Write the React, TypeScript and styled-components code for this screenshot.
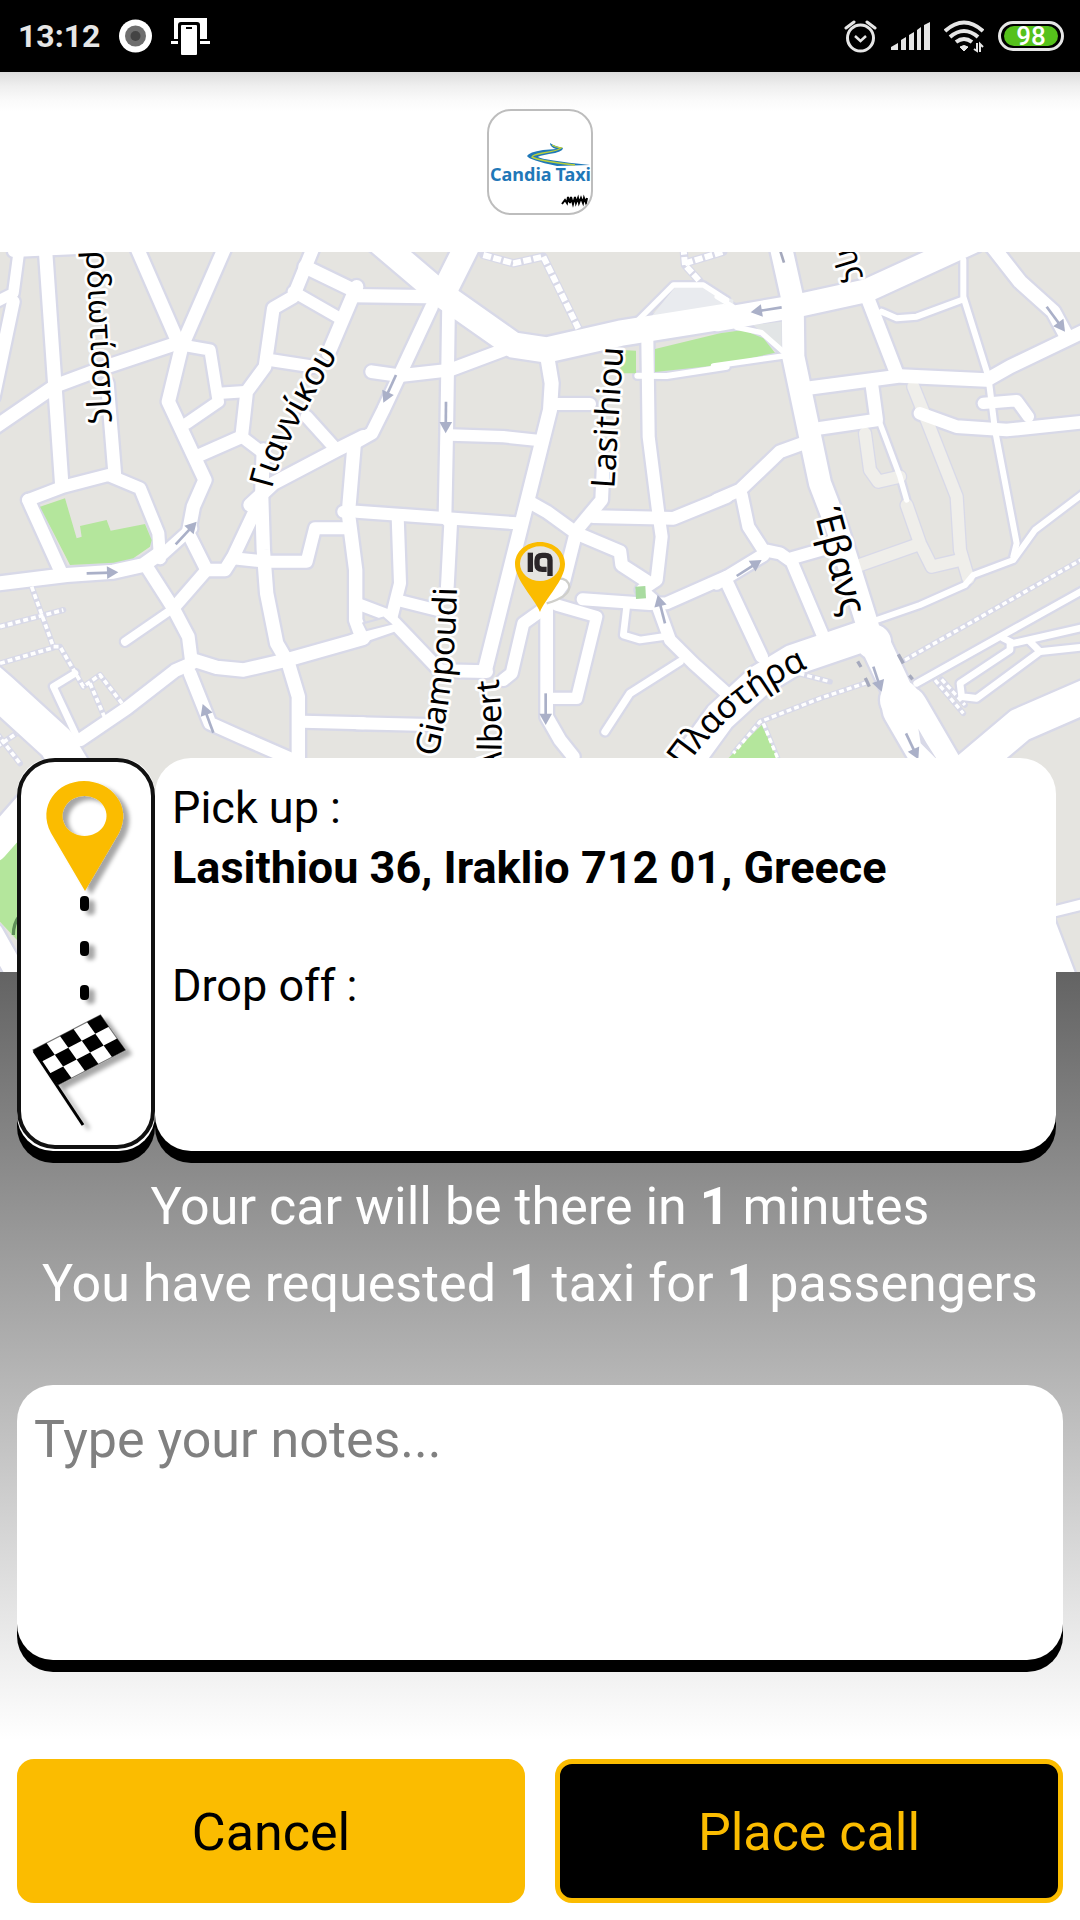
import React from "react";
import styled, { createGlobalStyle, css } from "styled-components";

const GlobalStyle = createGlobalStyle`
  *, *::before, *::after { box-sizing: border-box; }
  html, body { margin: 0; padding: 0; background: #fff; }
  body { font-family: Roboto, "Noto Sans", sans-serif; color: #000; }
`;

const gold = "#fbbc00";

/* ---------- page ---------- */

const Page = styled.div`
  min-height: 100vh;
  display: flex;
  flex-direction: column;
`;

const StatusBar = styled.header`
  height: 72px;
  padding: 0 16px 0 18px;
  display: flex;
  align-items: center;
  justify-content: space-between;
  background: #000;
  color: #e6e6e6;
`;

const StatusGroup = styled.div<{ $gap: number }>`
  display: flex;
  align-items: center;
  gap: ${(p) => p.$gap}px;
  svg { display: block; }
`;

const Clock = styled.time`
  font-size: 32px;
  line-height: 40px;
  font-weight: 700;
`;

const BrandBar = styled.div`
  height: 180px;
  display: flex;
  align-items: center;
  justify-content: center;
  background: linear-gradient(#dcdcdc 0, #efefef 14px, #fafafa 28px, #fff 40px);
`;

const BrandTile = styled.div`
  width: 106px;
  height: 106px;
  border: 2px solid #bdbdbd;
  border-radius: 24px;
  background: #fff;
  overflow: hidden;
  svg { display: block; }
`;

const MapArea = styled.section`
  height: 720px;
  background: #e5e4e0;
  svg { display: block; width: 100%; height: 100%; }
`;

const Panel = styled.main`
  flex: 1;
  display: flex;
  flex-direction: column;
  padding: 0 17px 17px;
  background: linear-gradient(#636363 0, #fff 768px);
`;

const raised = css`
  background: #fff;
  border-radius: 36px;
  box-shadow: 0 12px 0 #000;
`;

const Trip = styled.section`
  display: flex;
  height: 393px;
  margin: -214px 7px 17px 0;
`;

const RouteCard = styled.div`
  ${raised}
  width: 138px;
  svg { display: block; }
`;

const AddressCard = styled.dl`
  ${raised}
  flex: 1;
  margin: 0;
  padding: 20px 17px;
  font-size: 45px;
  line-height: 60px;
`;

const Term = styled.dt`
  font-weight: 400;
`;

const Value = styled.dd`
  margin: 0;
  min-height: 118px;
  font-weight: 700;
`;

const Summary = styled.div`
  text-align: center;
  color: #fff;
  font-size: 52px;
  line-height: 77px;
  p { margin: 0; }
`;

const Notes = styled.textarea`
  ${raised}
  display: block;
  width: 100%;
  height: 275px;
  margin: 63px 0 99px;
  padding: 25px 17px;
  border: 0;
  outline: 0;
  resize: none;
  color: #000;
  font: 400 52px/60px Roboto, sans-serif;
  &::placeholder { color: #808080; opacity: 1; }
`;

const Actions = styled.div`
  display: grid;
  grid-template-columns: 1fr 1fr;
  gap: 30px;
`;

const Button = styled.button<{ $dark?: boolean }>`
  height: 144px;
  padding: 4px 0 0;
  border: 5px solid ${gold};
  border-radius: 17px;
  background: ${(p) => (p.$dark ? "#000" : gold)};
  color: ${(p) => (p.$dark ? gold : "#000")};
  font: 400 52px/60px Roboto, sans-serif;
`;

/* ---------- map data, in thirds of a pixel ---------- */

type Road = [number, string];

const tiles: Road[][] = [
  [
    [32, "60,-20 40,130 -20,160"],
    [38, "40,155 -20,440"],
    [32, "40,5 250,-5"],
    [40, "135,-20 185,700"],
    [40, "-20,535 165,408 320,350 515,285"],
    [40, "405,-20 540,290"],
    [40, "680,-20 545,290 505,455 615,690 580,770 565,850"],
    [34, "545,285 630,300 655,455 560,520"],
    [34, "655,430 735,425"],
    [38, "945,-20 880,140 820,175 795,350 740,425 725,560 600,615"],
    [34, "725,560 790,610"],
    [40, "915,50 1070,125"],
    [34, "880,125 1020,205"],
    [40, "1070,110 985,310"],
    [36, "810,330 940,350"],
    [36, "920,500 1010,600"],
    [40, "1090,560 1010,600 820,700 750,765"],
    [40, "790,600 785,740 790,900 800,1030 830,1180 865,1240 895,1340 895,1530"],
    [38, "785,740 700,920 675,960 620,960 565,850"],
    [36, "700,925 800,935 920,935 945,835 1050,835"],
    [36, "620,960 520,1075"],
    [24, "520,1075 375,1175"],
    [38, "322,400 345,680"],
    [36, "85,750 190,710 325,675 420,715 475,850 480,925"],
    [38, "85,750 180,960"],
    [42, "-20,1002 200,975 340,965 430,945 480,910"],
    [34, "480,920 575,835"],
    [38, "440,950 520,1075 565,1160 575,1240 525,1262 380,1375 240,1470"],
    [40, "580,1230 650,1252 730,1260 860,1230 1090,1165"],
    [38, "570,1270 630,1420 720,1460 880,1530"],
    [110, "-40,1290 0,1325 170,1480 230,1580"],
    [90, "200,1540 -20,1790"],
    [60, "-20,2050 120,2300"],
    [20, "225,1270 160,1310 235,1470"],
    [40, "1062,590 1045,790 1067,960 1067,1110 1085,1160"],
    [36, "1030,785 1045,785"],
    [36, "910,1415 1090,1420"],
  ],
  [
    [76, "40,-40 240,130 460,285 560,300 780,250 1090,200"],
    [74, "330,-30 250,130"],
    [40, "-20,137 200,140"],
    [38, "215,170 70,480 35,550 -10,575"],
    [38, "266,150 260,550 255,800 272,820 262,1010"],
    [38, "35,365 120,377 270,360 430,300"],
    [42, "560,310 575,400 570,480 500,760 375,1260"],
    [36, "580,462 690,462"],
    [34, "270,555 430,560 540,572"],
    [36, "-10,785 470,820"],
    [36, "113,800 120,1000 95,1100"],
    [34, "-10,1060 95,1100"],
    [34, "-20,1170 95,1130"],
    [38, "95,1110 240,1262 380,1265"],
    [34, "110,1050 230,1080"],
    [36, "-10,1420 210,1425"],
    [36, "430,1290 455,1270 490,1120 560,1070"],
    [38, "730,640 725,750 650,840 610,1000 560,1070"],
    [38, "515,760 560,785 650,850 780,905 785,945 870,1000"],
    [38, "700,800 940,805 1100,740"],
    [36, "862,270 866,560 895,790 905,860 890,990 845,1020 890,1060 930,1170 1000,1240 1100,1330"],
    [36, "668,1048 870,1062 920,1060 1100,980"],
    [34, "590,1065 710,1100 650,1345 580,1345"],
    [38, "560,1080 560,1400 600,1470 640,1520"],
    [20, "800,1070 790,1155 840,1170 910,1160"],
    [22, "960,1235 810,1330 735,1445"],
    [18, "832,377 920,378 1100,350"],
    [16, "830,215 940,105 1030,105 1100,150"],
    [92, "920,1620 1080,1400 1200,1290 1300,1230 1520,1155"],
  ],
  [
    [68, "-10,210 220,170 440,122 760,-25"],
    [66, "180,-20 218,150 220,320 300,700 350,830 450,1150"],
    [16, "-20,348 190,318"],
    [16, "50,232 125,248 190,305"],
    [14, "-10,140 40,170"],
    [40, "445,150 530,370"],
    [40, "260,415 540,378 800,390 870,350 1100,240"],
    [42, "810,-20 900,95 1000,185 1035,250"],
    [18, "730,30 730,140 805,380 825,540 890,880 880,920"],
    [18, "485,185 530,205 590,200 725,150"],
    [34, "790,460 890,452 925,500"],
    [38, "455,400 470,510 300,535"],
    [38, "600,490 710,530 860,540 1100,515"],
    [16, "480,520 540,680 560,750"],
    [38, "-10,750 60,720 180,605 250,580"],
    [36, "65,735 85,830 130,900 180,910 215,935 310,1160"],
    [36, "215,925 320,895"],
    [38, "-10,1000 130,915"],
    [38, "22,1000 125,1220"],
    [18, "470,1110 600,1065 735,1005 760,975 880,930 945,840 1090,730"],
    [20, "590,1300 840,1160 1100,1015"],
    [20, "850,1165 880,1180 1100,1130"],
    [20, "930,1175 960,1205 1100,1190"],
    [20, "960,1205 770,1345 725,1340 720,1300 870,1200 870,1180"],
    [90, "470,1190 545,1350"],
    [104, "460,1175 461,1176"],
    [120, "540,1350 541,1351"],
    [136, "555,1375 680,1590"],
    [100, "1130,1325 900,1425 740,1560"],
    [30, "960,1995 1100,1960"],
    [90, "960,2020 1040,2230"],
  ],
];

const unpaved = [
  "435,550 450,660 475,695 540,680",
  "580,410 620,510 710,740 720,900 745,985",
  "560,765 600,880 635,950 720,930",
  "420,945 590,885",
];

const footpaths: Road[][] = [
  [
    [11, "95,1010 160,1190 180,1190 250,1310 300,1275 370,1365"],
    [11, "0,1130 190,1080"],
    [11, "0,1240 160,1193"],
    [11, "270,1300 315,1405"],
    [11, "-10,1450 60,1540"],
    [11, "-10,1490 50,1450"],
    [11, "-10,1800 60,1740"],
  ],
  [
    [18, "370,15 460,40 550,20 655,235"],
    [18, "970,-10 975,45 1020,95"],
    [18, "975,40 1090,5"],
  ],
  [
    [10, "555,1230 1100,920"],
    [10, "440,1298 300,1345 120,1415 40,1510"],
    [10, "130,1420 175,1530"],
    [10, "215,1265 330,1295"],
    [10, "645,1290 730,1390"],
    [10, "665,1288 735,1365"],
  ],
];

const parks = [
  ["#b4e69c", "120,770 195,745 230,865 245,860 240,828 320,810 332,842 435,822 455,870 450,890 400,925 340,938 210,945"],
  ["#b4e69c", "1865,300 1908,302 1908,370 1860,370"],
  ["#b4e69c", "1965,297 2160,250 2230,240 2290,265 2325,308 2160,345 1965,366"],
  ["#b4e69c", "2285,1425 2350,1560 2170,1540"],
  ["#e9ebef", "1950,205 2025,112 2110,112 2200,150 2200,180"],
  ["#e2e5e6", "2260,225 2345,215 2345,300"],
  ["#b4e69c", "-5,1785 60,1730 160,1800 160,2160 60,2080 -5,2010"],
];

const arrows: [number, number, number, number][] = [
  [260, 970, 355, 967],
  [527, 883, 590, 815],
  [640, 1448, 608, 1362],
  [1188, 375, 1150, 458],
  [1338, 455, 1337, 550],
  [1637, 1330, 1637, 1425],
  [1995, 1120, 1973, 1035],
  [2345, 172, 2252, 187],
  [3140, 170, 3195, 245],
  [2210, 978, 2285, 930],
  [2620, 1250, 2645, 1325],
  [2718, 1450, 2755, 1528],
];

const labels: [string, string, string, number][] = [
  ["l1", "M 258,4 L 287,580", "ρδιωτίσσης", 96],
  ["l2", "M 816,718 Q 839,600 1022,300", "Γιαννίκου", 101],
  ["l3", "M 1843,716 L 1871,270", "Lasithiou", 99],
  ["l4", "M 1310,1522 Q 1364,1340 1371,1000", "Giampoudi", 99],
  ["l5", "M 1502,1568 Q 1512,1370 1488,1240", "Albert", 99],
  ["l6", "M 2052,1560 Q 2200,1345 2460,1238", "Πλαστήρα", 102],
  ["l7", "M 2442,786 L 2540,1150", "Έβανς", 111],
  ["l8", "M 2514,2 L 2562,160", "ης", 92],
];

const toPath = (points: string) => "M" + points.split(" ").join(" L");

function CityMap() {
  return (
    <svg viewBox="0 6 3240 2160" preserveAspectRatio="xMidYMid slice" role="img" aria-label="Map of Iraklio around Lasithiou street">
      <g fill="none" stroke="#d8d9e8" strokeLinecap="round" strokeLinejoin="round">
        {tiles.map((roads, t) => (
          <g key={t} transform={`translate(${t * 1080} 0)`}>
            {roads.map(([w, p], i) => <path key={i} d={toPath(p)} strokeWidth={w + 14} />)}
            {footpaths[t].map(([w, p], i) => <path key={`f${i}`} d={toPath(p)} strokeWidth={w + 7} />)}
          </g>
        ))}
        <g transform="translate(2160 0)">
          {unpaved.map((p) => <path key={p} d={toPath(p)} strokeWidth={44} />)}
        </g>
      </g>
      {parks.map(([fill, p]) => <polygon key={p} points={p} fill={fill} />)}
      <g fill="none" stroke="#fff" strokeLinejoin="round">
        {footpaths.map((paths, t) => (
          <g key={t} transform={`translate(${t * 1080} 0)`}>
            {paths.map(([w, p], i) => <path key={i} d={toPath(p)} strokeWidth={w} strokeDasharray={w > 12 ? "24 7" : "15 9"} />)}
          </g>
        ))}
      </g>
      <g transform="translate(2160 0)" fill="none" stroke="#efeeea" strokeLinecap="round" strokeLinejoin="round" strokeWidth={36}>
        {unpaved.map((p) => <path key={p} d={toPath(p)} />)}
      </g>
      <g fill="none" stroke="#fff" strokeLinecap="round" strokeLinejoin="round">
        {tiles.map((roads, t) => (
          <g key={t} transform={`translate(${t * 1080} 0)`}>
            {roads.map(([w, p], i) => <path key={i} d={toPath(p)} strokeWidth={w} />)}
          </g>
        ))}
      </g>
      <polygon points="1090,1120 1150,1103 1172,1122 1100,1140" fill="#e5e4e0" stroke="#d8d9e8" strokeWidth="6" />
      <polygon points="1906,1010 1936,1008 1938,1045 1908,1047" fill="#a9dba0" />
      <polygon points="2755,1436 2762,1480 2812,1530 2780,1480" fill="#d8d9e8" />
      <g stroke="#a5a9bd" strokeWidth="10" fill="none">
        <path d="M2695,1213 L2710,1240 M2728,1276 L2738,1288 M2573,1234 L2583,1251 M2596,1284 L2608,1310" />
        <path d="M2340,0 L2352,38" strokeWidth="8" />
      </g>
      <path d="M40,2055 Q40,2020 60,1995" fill="none" stroke="#5e8f58" strokeWidth="10" />
      <g stroke="#aab0c8" fill="#aab0c8">
        {arrows.map(([x1, y1, x2, y2]) => {
          const angle = (Math.atan2(y2 - y1, x2 - x1) * 180) / Math.PI;
          const length = Math.hypot(x2 - x1, y2 - y1);
          return (
            <g key={`${x1}-${y1}`} transform={`translate(${x1} ${y1}) rotate(${angle})`}>
              <line x1="0" y1="0" x2={length - 20} y2="0" strokeWidth="8" />
              <polygon points={`${length},0 ${length - 34},-19 ${length - 34},19`} stroke="none" />
            </g>
          );
        })}
      </g>
      <g fontFamily="'Noto Sans', 'Open Sans', sans-serif" fill="#000" stroke="#fff" strokeWidth="16" strokeLinejoin="round" paintOrder="stroke">
        {labels.map(([id, d, text, size]) => (
          <React.Fragment key={id}>
            <path id={id} d={d} fill="none" stroke="none" />
            <text fontSize={size}><textPath href={`#${id}`}>{text}</textPath></text>
          </React.Fragment>
        ))}
      </g>
      <path d="M1675,985 Q1705,985 1708,1010 Q1708,1040 1640,1060" fill="none" stroke="#cfcfcb" strokeWidth="7" />
      <path d="M1620,1086 C1606,1048 1545,990 1545,942 C1545,905 1578,876 1620,876 C1662,876 1695,905 1695,942 C1695,990 1634,1048 1620,1086 Z" fill={gold} />
      <ellipse cx="1620" cy="941" rx="60" ry="52" fill="#e5e4e0" />
      <g fill="none" stroke="#2b2629" strokeWidth="16">
        <path d="M1591,908 V966" />
        <path d="M1650,978 V930 Q1650,916 1636,916 H1627 Q1611,916 1611,932 V943 Q1611,958 1627,958 H1640" />
      </g>
    </svg>
  );
}

/* ---------- drawings ---------- */

function CandiaLogo() {
  return (
    <svg width="102" height="102" viewBox="0 0 102 102" role="img" aria-label="Candia Taxi">
      <path d="M61,32 Q65,35 74,37 Q74,41 60,43 Q49,45 49,46 Q54,49 101,54 L68,55 Q40,49 38,45 Q40,41 54,39 L67,38 Q61,36 61,32 Z" fill="#1f78b8" />
      <path d="M63,34 Q66,36 72,37 Q68,40 54,42 Q43,44 43,46 Q50,50 86,54" fill="none" stroke="#b9cf3b" strokeWidth="1.500" />
      <text y="70" fontFamily="'Noto Sans', sans-serif" fontWeight="700" fontSize="18" fill="#1f78b8">
        <tspan x="1">Candia</tspan>
        <tspan x="102" textAnchor="end">Taxi</tspan>
      </text>
      <path d="M73,93 l3,-4 2,3 1,-6 2,6 1,-6 2,7 2,-7 1,6 2,-5 1,5 2,-5 2,5 1,-5 2,5 1,-5" fill="none" stroke="#000" strokeWidth="2" />
    </svg>
  );
}

function RouteDrawing() {
  const cells = [];
  for (let r = 0; r < 3; r++) {
    for (let c = 0; c < 5; c++) {
      if ((r + c) % 2 === 0) cells.push(<rect key={`${r}${c}`} x={c * 14} y={r * 13} width="14" height="13" />);
    }
  }
  return (
    <svg width="138" height="391" viewBox="0 0 138 391" aria-hidden="true">
      <defs>
        <filter id="drop" x="-30%" y="-30%" width="170%" height="170%">
          <feDropShadow dx="6" dy="4" stdDeviation="2" floodColor="#000" floodOpacity="0.35" />
        </filter>
      </defs>
      <rect x="2" y="2" width="134" height="387" rx="36" fill="#fff" stroke="#111" strokeWidth="4" />
      <g filter="url(#drop)">
        <path fillRule="evenodd" fill={gold} d="M68,133 L34,75 C20,48 40,23 67,23 C94,23 116,48 102,75 Z M67,38 a22,20 0 1 0 1,0 Z" />
        <rect x="63" y="138" width="9" height="15" rx="4" />
        <rect x="63" y="183" width="9" height="15" rx="4" />
        <rect x="63" y="227" width="9" height="15" rx="4" />
        <g transform="matrix(0.964 -0.5 0.64 0.9 16 292)">
          <rect x="0" y="0" width="70" height="39" fill="#fff" stroke="#777" strokeWidth="1" />
          {cells}
        </g>
        <path d="M17,293 L66,367" stroke="#000" strokeWidth="3" />
      </g>
    </svg>
  );
}

function StatusIcons() {
  return (
    <>
      <svg width="33" height="34" viewBox="0 0 33 34" fill="none" stroke="#e6e6e6" strokeWidth="3" aria-label="Alarm set">
        <circle cx="16.500" cy="19" r="13" />
        <path d="M11,17 L16.500,22 L22,17" strokeWidth="2.500" />
        <path d="M2,9 L10,3 M31,9 L23,3" strokeLinecap="round" />
      </svg>
      <svg width="39" height="30" viewBox="0 0 39 30" fill="#e6e6e6" aria-label="Signal strength">
        <path d="M0,29 v-3 l7,-4 v7 Z M10,29 v-10 l5,-3 v13 Z M18,29 v-15 l5,-3 v18 Z M26,29 v-20 l4,-3 v23 Z M33,29 V4 l6,-3 V29 Z" />
      </svg>
      <svg width="40" height="34" viewBox="0 0 40 34" fill="none" stroke="#e6e6e6" strokeWidth="4" aria-label="Wi-Fi">
        <path d="M1,12 Q20,-5 39,12" />
        <path d="M6,18 Q20,6 34,18" />
        <path d="M12,23 Q20,17 28,23" />
        <path d="M16,28 Q20,25 24,28 L20,32 Z" fill="#e6e6e6" strokeWidth="1" />
        <path d="M30,30 l3,2 V24 M39,28 l-3,-3 V33" strokeWidth="2" />
      </svg>
      <svg width="66" height="30" viewBox="0 0 66 30" aria-label="Battery 98 percent">
        <rect x="1.500" y="1.500" width="63" height="27" rx="13.500" fill="#000" stroke="#e6e6e6" strokeWidth="3" />
        <rect x="6" y="5" width="54" height="20" rx="10" fill="#55c11b" />
        <text x="33" y="24" textAnchor="middle" fontFamily="Roboto, sans-serif" fontWeight="500" fontSize="26" fill="#fff">98</text>
      </svg>
    </>
  );
}

export default function App() {
  return (
    <Page>
      <GlobalStyle />
      <StatusBar>
        <StatusGroup $gap={19}>
          <Clock>13:12</Clock>
          <svg width="33" height="34" viewBox="0 0 33 34" aria-hidden="true">
            <circle cx="16.500" cy="17" r="16.500" fill="#fff" />
            <circle cx="16.500" cy="17" r="10.500" fill="#6e6e6e" />
            <circle cx="16.500" cy="17" r="5" fill="#444" />
          </svg>
          <svg width="39" height="37" viewBox="0 0 39 37" aria-hidden="true">
            <path d="M3,0 H36 V21 H3 Z M0,23 H39 V26 H0 Z" fill="#fff" />
            <rect x="7" y="4" width="22" height="33" rx="3" fill="#000" />
            <rect x="10" y="7" width="16" height="30" rx="1" fill="#fff" />
            <rect x="15" y="9" width="6" height="2" fill="#000" />
          </svg>
        </StatusGroup>
        <StatusGroup $gap={14}>
          <StatusIcons />
        </StatusGroup>
      </StatusBar>
      <BrandBar>
        <BrandTile><CandiaLogo /></BrandTile>
      </BrandBar>
      <MapArea><CityMap /></MapArea>
      <Panel>
        <Trip>
          <RouteCard><RouteDrawing /></RouteCard>
          <AddressCard>
            <Term>Pick up :</Term>
            <Value>Lasithiou 36, Iraklio 712 01, Greece</Value>
            <Term>Drop off :</Term>
          </AddressCard>
        </Trip>
        <Summary>
          <p>Your car will be there in <strong>1</strong> minutes</p>
          <p>You have requested <strong>1</strong> taxi for <strong>1</strong> passengers</p>
        </Summary>
        <Notes aria-label="Notes" placeholder="Type your notes..." />
        <Actions>
          <Button type="button">Cancel</Button>
          <Button type="button" $dark>Place call</Button>
        </Actions>
      </Panel>
    </Page>
  );
}
